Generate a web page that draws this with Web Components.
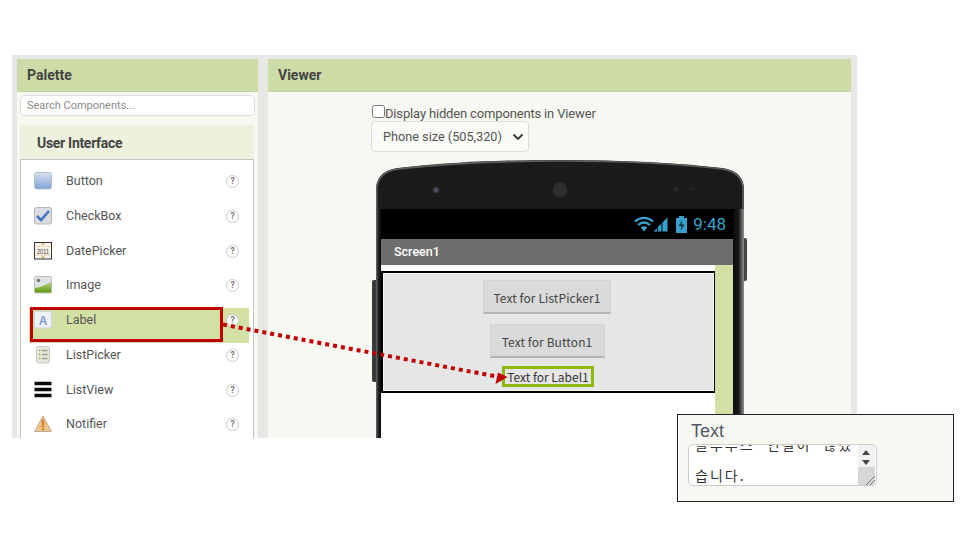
<!DOCTYPE html>
<html lang="en"><head><meta charset="utf-8"><title>Palette</title>
<style>html,body{margin:0;background:#fff}</style></head>
<body>
<app-screen>
  <app-palette>
    <app-item name="Button"><svg viewBox="0 0 18 18"><defs><linearGradient id="b" x1="0" y1="0" x2="0" y2="1"><stop offset="0" stop-color="#d5e0ee"/><stop offset=".35" stop-color="#b9cce6"/><stop offset="1" stop-color="#7fa3d8"/></linearGradient></defs><rect x=".5" y=".5" width="17" height="16.5" rx="2" fill="url(#b)" stroke="#b4bcc8"/></svg></app-item>
    <app-item name="CheckBox"><svg viewBox="0 0 18 18"><rect x=".5" y=".5" width="17" height="16.5" rx="2" fill="#dcdde0" stroke="#b5b7ba"/><path d="M3 9l4 4 8-9" fill="none" stroke="#3f76c5" stroke-width="2.6"/></svg></app-item>
    <app-item name="DatePicker"><svg viewBox="0 0 18 18"><rect x=".5" y=".5" width="17" height="16.5" fill="#fbf6ec" stroke="#333"/><path d="M7 1.500h4L9 3.500ZM7 16h4L9 14Z" fill="#d99a50"/><path d="M1.500 4.300h15M1.500 13.200h15" stroke="#e8c9a0" stroke-width=".8"/><text x="9" y="11.700" font-family="Liberation Sans Narrow,Liberation Sans" font-size="7" textLength="12" lengthAdjust="spacingAndGlyphs" text-anchor="middle" fill="#333">2011</text></svg></app-item>
    <app-item name="Image"><svg viewBox="0 0 18 18"><defs><linearGradient id="g" x1="0" y1="0" x2="0" y2="1"><stop offset="0" stop-color="#b8d27a"/><stop offset="1" stop-color="#5f9a10"/></linearGradient></defs><rect x=".5" y=".5" width="17" height="16.5" rx="1" fill="#dfe3e4" stroke="#bbb"/><path d="M1 16.500V12Q8 11 17 6V16.500Z" fill="url(#g)"/><circle cx="4.500" cy="4.500" r="1.800" fill="#777"/></svg></app-item>
    <app-item name="Label" selected><svg viewBox="0 0 18 18"><rect x=".5" y=".5" width="17" height="16.500" rx="2" fill="#f0f2f6" stroke="#cfd3d8"/><text x="9" y="13.500" font-family="Liberation Sans" font-weight="700" font-size="12" text-anchor="middle" fill="#7c9fd8">A</text></svg></app-item>
    <app-item name="ListPicker"><svg viewBox="0 0 18 18"><rect x="2.500" y=".5" width="13" height="16.500" rx="2" fill="#e7ead9" stroke="#c6c8c0"/><path d="M5 4.500h1.500M5 8.500h1.500M5 12.500h1.500" stroke="#8db33a" stroke-width="1.600"/><path d="M8 4.500h5.500M8 8.500h5.500M8 12.500h5.500" stroke="#9a9c98" stroke-width="1.300"/></svg></app-item>
    <app-item name="ListView"><svg viewBox="0 0 18 18"><path d="M.5 2.500h17M.5 8.500h17M.5 14.500h17" stroke="#0a0a0a" stroke-width="3.400"/></svg></app-item>
    <app-item name="Notifier"><svg viewBox="0 0 18 18"><path d="M9 1L17.500 16.500H.5Z" fill="#f0c48a" stroke="#a8a08e" stroke-width=".8"/><path d="M9 4.500v8" stroke="#d98a28" stroke-width="2.500"/><path d="M9 13.500v1.800" stroke="#c87a20" stroke-width="2"/></svg></app-item>
  </app-palette>
  <app-viewer>
    <app-phone>
      <app-vbutton w="128">Text for ListPicker1</app-vbutton>
      <app-vbutton w="115">Text for Button1</app-vbutton>
      <app-vlabel>Text for Label1</app-vlabel>
    </app-phone>
  </app-viewer>
  <app-arrow slot="over"></app-arrow>
  <app-note slot="over"></app-note>
</app-screen>
<script>
function def(name, html){
  customElements.define(name, class extends HTMLElement{
    constructor(){super();this.attachShadow({mode:'open'}).innerHTML=typeof html==='function'?html(this):html;}
  });
}
def('app-screen',`<style>
:host{display:block;position:relative;width:960px;height:540px;background:#fff;overflow:hidden;font-family:Roboto,sans-serif}
.page{box-sizing:border-box;margin:55px 0 0 12px;width:845px;height:383px;padding:4px 6px 0 5px;background:#e7e7e5;display:flex;gap:10px;overflow:hidden}
</style><div class="page"><slot></slot></div><slot name="over"></slot>`);

def('app-palette',`<style>
:host{display:block;width:241px;flex:none;height:400px;background:#f7f8f2;color:#444}
.head{height:33px;box-sizing:border-box;background:#cddca6;border-bottom:1px solid #c3d29b;padding:0 10px;display:flex;align-items:center;font:700 14px Roboto,sans-serif;color:#444}
.search{box-sizing:border-box;margin:3px 3px 0;height:21px;width:235px;background:#fff;border:1px solid #ddd;border-radius:5px;padding:0 6px;display:flex;align-items:center;font:11px Roboto,sans-serif;color:#8a8a8a}
.sect{box-sizing:border-box;margin:9px 4px 0 3px;height:34px;padding:2px 17px 0;background:#edf2de;display:flex;align-items:center;font:700 14px Roboto,sans-serif;color:#444;letter-spacing:-.3px}
.list{box-sizing:border-box;margin:0 4px 0 3px;background:#fff;border:1px solid #c4c4c4;padding:9px 4px 0 8px;height:300px}
</style><div class="head">Palette</div><div class="search">Search Components...</div><div class="sect">User Interface</div><div class="list"><slot></slot></div>`);

def('app-item',h=>`<style>
:host{display:block;height:34.75px;box-sizing:border-box}
.row{display:flex;height:100%;box-sizing:border-box;padding:0 10px 0 5px;${h.hasAttribute('selected')?'background:#d3e0a4;':''}}
.ico{width:18px;height:24px;display:flex;align-items:center;flex:none}
::slotted(svg){width:18px;height:18px;display:block}
.name{margin-left:14px;flex:1;font:12.5px/24px Roboto,sans-serif;color:#555}
.q{width:13px;height:13px;margin-top:6px;box-sizing:border-box;border:1.500px solid #c9c9c9;border-radius:50%;background:#fff;font:700 8.500px/10px Roboto,sans-serif;color:#777;text-align:center}
</style><div class="row"><span class="ico"><slot></slot></span><span class="name">${h.getAttribute('name')}</span><span class="q">?</span></div>`);

def('app-viewer',`<style>
:host{display:block;width:583px;flex:none;height:400px;background:#f7f8f2}
.head{height:33px;box-sizing:border-box;background:#cddca6;border-bottom:1px solid #c3d29b;padding:0 10px;display:flex;align-items:center;font:700 14px Roboto,sans-serif;color:#444}
.main{display:flex;flex-direction:column;padding:0 0 0 103px}
.chk{display:flex;align-items:center;height:20px;margin-top:11px;font:13px Roboto,sans-serif;color:#555;letter-spacing:-.16px}
.box{width:13px;height:13px;box-sizing:border-box;border:1px solid #777;border-radius:2.500px;background:#fff;margin:-3px 0 0 1px}
.sel{box-sizing:border-box;width:158px;height:31px;margin-top:-2px;background:#fafaf6;border:1px solid #ddd;border-radius:4px;padding:0 4px 0 11px;display:flex;align-items:center;justify-content:space-between;font:12.7px Roboto,sans-serif;color:#555}
.sel svg{width:12px;height:8px}
.ph{margin:8px 0 0 5px}
</style><div class="head">Viewer</div><div class="main">
<div class="chk"><span class="box"></span>Display hidden components in Viewer</div>
<div class="sel">Phone size (505,320)<svg viewBox="0 0 12 8"><path d="M1.500 1.500L6 6l4.500-4.500" fill="none" stroke="#333" stroke-width="1.800"/></svg></div>
<div class="ph"><slot></slot></div></div>`);

def('app-phone',`<style>
:host{display:block;position:relative;width:368px;height:300px}
.top{display:block;width:368px;height:49px}
.btnL{position:absolute;left:-4px;top:120px;width:4px;height:102px;background:#3a3a3a;border-radius:2px 0 0 2px}
.btnR{position:absolute;right:-3px;top:78px;width:3px;height:43px;background:#444;border-radius:0 2px 2px 0}
.body{display:flex;height:251px;background:#111}
.edgeL{width:5px;flex:none;background:linear-gradient(90deg,#6a6a6a,#222 50%,#0a0a0a)}
.edgeR{width:11px;flex:none;background:linear-gradient(90deg,#0c0c0c 0,#171717 50%,#6e6e6e 85%,#8a8a8a)}
.mid{width:352px;flex:none;display:flex;flex-direction:column;background:#fff}
.status{height:30px;background:#000;display:flex;align-items:center;justify-content:flex-end;padding-right:7px;color:#35a3cd;font:17px Roboto,sans-serif}
.status svg{height:18px;width:53px;margin-right:6px;display:block}
.title{height:26px;background:#6e6e6e;color:#fff;font:500 12.500px/26px Roboto,sans-serif;padding-left:13px}
.scr{flex:1;display:flex;background:#fff}
.left{flex:1;padding-top:6px}
.green{width:18px;flex:none;background:#d3e0a4}
.arr{box-sizing:border-box;height:122px;background:#e6e6e6;border:2px solid #000;box-shadow:inset 0 0 0 1px #f6f6f6;display:flex;flex-direction:column;align-items:center;padding:7px 3px 0 0;gap:10px;margin-right:-1px}
</style>
<svg class="top" viewBox="0 0 368 49"><defs><radialGradient id="cam"><stop offset="0" stop-color="#54608c"/><stop offset=".5" stop-color="#444"/><stop offset="1" stop-color="#1a1a1a"/></radialGradient></defs>
<path d="M0 49V30Q0 11 22 8Q90 0 184 0T346 8Q368 11 368 30V49Z" fill="#1b1b1b"/>
<path d="M.8 49V30Q.8 12 22 9Q90 1 184 1T346 9Q367 12 367 30V49" fill="none" stroke="#5f5f5f" stroke-width="1.600"/>
<circle cx="60" cy="30" r="4" fill="url(#cam)"/><circle cx="184" cy="30" r="7.500" fill="#2e2e2e"/><circle cx="300" cy="29" r="2.500" fill="#252525"/><circle cx="316" cy="29" r="1.800" fill="#252525"/></svg>
<div class="btnL"></div><div class="btnR"></div>
<div class="body"><div class="edgeL"></div><div class="mid">
<div class="status"><svg viewBox="0 0 53 18"><g fill="none" stroke="#35a3cd" stroke-width="2.200"><path d="M.8 6.500Q10-.8 19.200 6.500"/><path d="M4 10Q10 5 16 10"/></g><path d="M6.800 12.500Q10 10 13.200 12.500L10 16.500Z" fill="#35a3cd"/><path d="M19.500 16.500L33.500 2.500V16.500Z" fill="#35a3cd"/><path d="M28 8V17M23.500 12.500V17" stroke="#000" stroke-width="1"/><path d="M42 3h3V1h5v2h3v15H42Z" fill="#35a3cd"/><path d="M48.500 5L44.500 11h3l-1 5 4-6.500h-3Z" fill="#000" opacity=".7"/></svg>9:48</div>
<div class="title">Screen1</div>
<div class="scr"><div class="left"><div class="arr"><slot></slot></div></div><div class="green"></div></div>
</div><div class="edgeR"></div></div>`);

def('app-vbutton',h=>`<style>
:host{display:block;box-sizing:border-box;width:${h.getAttribute('w')}px;height:34px;background:#d9dad9;border:1px solid #d2d3d2;border-bottom:2px solid #b5b5b5;text-align:center;font:12px/33px "Noto Sans CJK KR","Noto Sans",sans-serif;color:#444;letter-spacing:.1px}
</style><slot></slot>`);

def('app-vlabel',`<style>
:host{display:block;box-sizing:border-box;width:92px;height:21px;margin:-2px 0 0 2px;background:#e6e6e6;border:3px solid #8fb80f;text-align:center;font:12px/16px "Noto Sans CJK KR","Noto Sans",sans-serif;color:#333;white-space:nowrap}
</style><slot></slot>`);

def('app-arrow',`<style>
:host{position:absolute;left:0;top:0;width:960px;height:540px;pointer-events:none}
svg{width:960px;height:540px;display:block}
</style><svg viewBox="0 0 960 540"><rect x="31.500" y="308.500" width="190" height="32" fill="none" stroke="#c00000" stroke-width="3"/>
<path d="M223 324.500L499 377" stroke="#c00000" stroke-width="4" stroke-dasharray="4 4" fill="none"/><path d="M507.500 377L498 372.500L495.500 384Z" fill="#c00000"/></svg>`);

def('app-note',`<style>
:host{position:absolute;left:677px;top:414px;box-sizing:border-box;width:277px;height:88px;background:#f7f8f2;border:1px solid #222;padding:5px 0 0 10px}
.t{font:18px/22px "Liberation Sans",sans-serif;color:#505868;margin-left:3px}
.ta{position:relative;box-sizing:border-box;width:189px;height:42px;margin-top:2px;background:#fff;border:1px solid #ccc;border-radius:5px;overflow:hidden}
.txt{margin:-16px 0 0 6px;width:165px;font:14px/31px "Noto Sans CJK KR",sans-serif;color:#333;letter-spacing:2px;word-spacing:7px;word-break:break-all}
.sb{position:absolute;right:1px;top:0;bottom:0;width:17px;background:#f1f1f1}
.th{position:absolute;left:0;right:0;top:22px;bottom:0;background:#d6d6d6}
.up,.dn{position:absolute;left:4px;width:0;height:0;border-left:4px solid transparent;border-right:4px solid transparent}
.up{top:5px;border-bottom:5px solid #444}.dn{top:15px;border-top:5px solid #444}
.g{position:absolute;right:0;bottom:0;width:10px;height:10px}
</style><div class="t">Text</div><div class="ta"><div class="txt">블루투스 연결이 끊겼습니다.</div><div class="sb"><div class="up"></div><div class="dn"></div><div class="th"></div><svg class="g" viewBox="0 0 10 10"><path d="M1 10L10 1M5 10L10 5" stroke="#777" stroke-width="1"/></svg></div></div>`);
</script>
</body></html>
